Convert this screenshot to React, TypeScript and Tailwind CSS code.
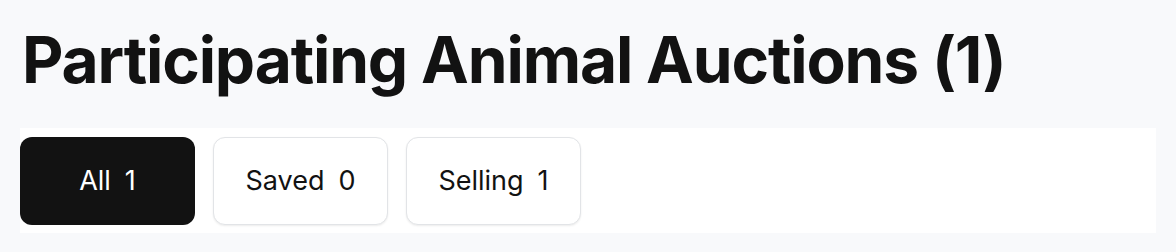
const tabs = [
  { label: 'All', count: 1, active: true },
  { label: 'Saved', count: 0, active: false },
  { label: 'Selling', count: 1, active: false },
];

export default function App() {
  return (
    <div className="h-[252px] w-full bg-[#f8f9fb] pl-5 pr-5 pt-[22px] font-['Inter',sans-serif] text-[#121212]">
      <h1 className="pl-[2px] text-[64px] leading-[76px] font-bold tracking-[-0.018em]">
        Participating Animal Auctions (1)
      </h1>
      <div className="mt-[30px] flex gap-[18px] bg-white pt-[9px] pb-[8px]">
        {tabs.map((t) => (
          <button
            key={t.label}
            className={
              t.active
                ? 'flex h-[88px] w-[175px] items-center justify-center gap-[14px] rounded-[12px] bg-[#121212] text-[27px] text-white'
                : 'flex h-[88px] w-[175px] items-center justify-center gap-[14px] rounded-[12px] border border-[#e2e4e7] bg-white text-[27px] text-[#121212] shadow-[0_1px_2px_rgba(0,0,0,0.08)]'
            }
          >
            <span>{t.label}</span>
            <span>{t.count}</span>
          </button>
        ))}
      </div>
    </div>
  );
}
